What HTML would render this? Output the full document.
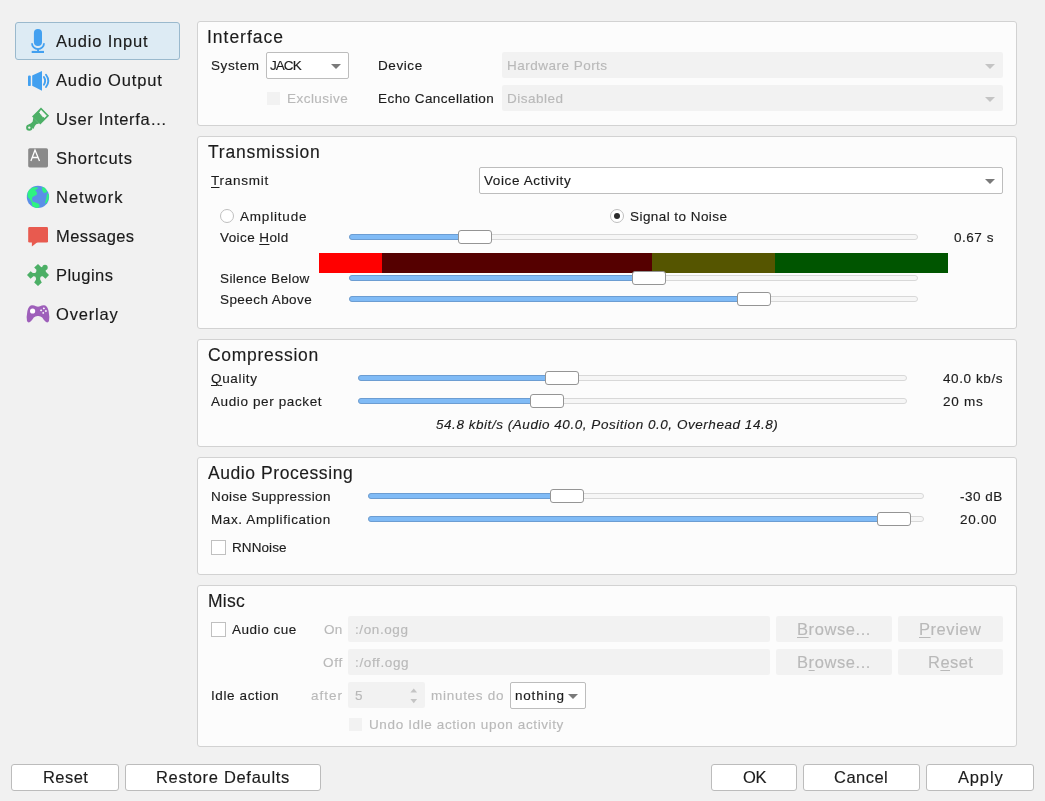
<!DOCTYPE html>
<html><head><meta charset="utf-8"><style>
html,body{margin:0;padding:0;}
body{width:1045px;height:801px;background:#f1f1f1;position:relative;overflow:hidden;font-family:"Liberation Sans",sans-serif;}
.b{position:absolute;box-sizing:content-box;}
.t{position:absolute;white-space:pre;line-height:1;font-family:"Liberation Sans",sans-serif;will-change:transform;-webkit-text-stroke:0.15px currentColor;}
u{text-decoration:underline;text-decoration-thickness:1px;text-underline-offset:2px;}
</style></head><body>
<div class="b" style="left:15px;top:22px;width:163px;height:36px;background:#ddebf4;border:1px solid #9ab9cd;border-radius:3px"></div>
<span class="t" style="left:56.09px;top:33px;font-size:16.5px;letter-spacing:0.815px;color:#1a1a1a">Audio Input</span>
<span class="t" style="left:56.09px;top:72px;font-size:16.5px;letter-spacing:0.861px;color:#1a1a1a">Audio Output</span>
<span class="t" style="left:56.12px;top:111px;font-size:16.5px;letter-spacing:0.677px;color:#1a1a1a">User Interfa…</span>
<span class="t" style="left:56.31px;top:150px;font-size:16.5px;letter-spacing:0.787px;color:#1a1a1a">Shortcuts</span>
<span class="t" style="left:56.22px;top:189px;font-size:16.5px;letter-spacing:1.001px;color:#1a1a1a">Network</span>
<span class="t" style="left:56.22px;top:228px;font-size:16.5px;letter-spacing:0.408px;color:#1a1a1a">Messages</span>
<span class="t" style="left:56.22px;top:267px;font-size:16.5px;letter-spacing:0.466px;color:#1a1a1a">Plugins</span>
<span class="t" style="left:56.12px;top:306px;font-size:16.5px;letter-spacing:0.799px;color:#1a1a1a">Overlay</span>

<svg class="b" style="left:24px;top:26px" width="28" height="30" viewBox="0 0 28 30">
 <rect x="9.9" y="3" width="8.1" height="17" rx="4.05" fill="#42a0f0"/>
 <path d="M8 17.2 A6 6 0 0 0 20 17.2" fill="none" stroke="#42a0f0" stroke-width="1.8"/>
 <rect x="13.1" y="22.5" width="1.9" height="2.6" fill="#42a0f0"/>
 <rect x="7.7" y="24.9" width="12.3" height="2.1" fill="#42a0f0"/>
</svg>
<svg class="b" style="left:24px;top:66px" width="28" height="28" viewBox="0 0 28 28">
 <rect x="4" y="9.4" width="2.8" height="10.7" rx="1.2" fill="#42a0f0"/>
 <path d="M8.2 9.6 L18 5.1 L18 24.8 L8.2 19.8 Z" fill="#42a0f0"/>
 <path d="M19.9 11 Q22.4 14.85 19.9 18.7" fill="none" stroke="#42a0f0" stroke-width="1.9" stroke-linecap="round"/>
 <path d="M22 8.7 Q26.6 14.85 22 21" fill="none" stroke="#42a0f0" stroke-width="1.9" stroke-linecap="round"/>
</svg>
<svg class="b" style="left:24px;top:104px" width="28" height="30" viewBox="0 0 28 30">
 <path d="M17 3.6 L25.1 11.8 L16.3 20.6 L8 12.5 Z M9.2 13.7 L15.1 19.4 L12.2 20.2 L10.8 22 L9.4 25 L4.4 20.6 L7 19.2 L8.7 17.5 Z" fill="#4caf66"/>
 <path d="M17 5.8 L22.8 11.8 L20.4 14.1 L19.6 13 L18.6 13.2 L18.2 12 L17.3 11.6 L17.2 10.5 L16.2 10.2 L15.9 9 L15 8.8 Z" fill="#f4f4f4"/>
 <circle cx="5.3" cy="23.6" r="2.2" fill="none" stroke="#4caf66" stroke-width="2"/>
</svg>
<svg class="b" style="left:24px;top:144px" width="28" height="28" viewBox="0 0 28 28">
 <rect x="4.2" y="4.2" width="19.8" height="19.2" rx="1.6" fill="#8a8a8a"/>
 <path d="M6.9 17.1 L11 6.1 L15.5 17.1 M8.6 13.5 L13.9 13.5" fill="none" stroke="#ffffff" stroke-width="1.3"/>
</svg>
<svg class="b" style="left:24px;top:182px" width="28" height="30" viewBox="0 0 28 30">
 <circle cx="13.95" cy="14.9" r="11.15" fill="#5b8fe8"/>
 <path d="M8.6 5.6 Q11 5 13.5 5.2 L13.9 6.6 L11.2 8 L13.1 10.9 L12.7 12.7 L8.6 15 L8 16.8 L8.6 19.5 L11.5 20.6 L15 22.1 L15.7 24.7 Q14 26 12.4 25.9 Q9.8 25.3 8.2 24 L7.9 21 L6.7 18.3 L3.7 15 Q3.3 12.5 3.9 10.1 Q4.6 8.5 5.6 7.5 Z" fill="#2ef380"/>
 <path d="M18 4.9 Q20 5.3 21 6 Q22.4 7.6 23.2 9.7 L22.1 10.5 L19.8 10.9 L18.3 8.6 Z" fill="#2ef380"/>
 <path d="M23.2 10.9 L24.7 12.4 Q25.3 15.4 24.3 18 Q23.3 20.2 21.7 21.7 L21 21 L22.1 16.8 L22.8 13.5 Z" fill="#2ef380"/>
</svg>
<svg class="b" style="left:24px;top:222px" width="28" height="28" viewBox="0 0 28 28">
 <rect x="4.2" y="5.1" width="19.8" height="15.5" rx="1.3" fill="#e85a4f"/>
 <path d="M7.9 20 L7.9 24.5 L13.6 20 Z" fill="#e85a4f"/>
</svg>
<svg class="b" style="left:24px;top:260px" width="28" height="30" viewBox="0 0 28 30">
 <path d="M14 3.9 L17.3 7.3 L19.3 9.3 L21.3 11.3 L25 15 L21.5 18.8 L18.7 16.3 Q16.4 15.8 16.2 18 L16.2 19.6 L17.8 22.4 L14 26 L10.2 22.4 L12 19.6 L12 18.5 Q11.8 15.9 9.4 16.3 L6.6 18.8 L3 15 L6.6 11.2 L8.8 12.9 Q12.6 13.8 12.4 9.7 L10.2 7.6 Z" fill="#4caf66"/>
 <circle cx="21" cy="7.5" r="2.7" fill="#4caf66"/>
 <path d="M16.5 7.5 L20.5 6.5 L22 11.5 L17.5 13 Z" fill="#4caf66"/>
</svg>
<svg class="b" style="left:24px;top:300px" width="28" height="28" viewBox="0 0 28 28">
 <path d="M7.7 5.2 Q10 5 12 6.3 Q14 7 16 6.3 Q18 5 20.3 5.2 Q23.5 5.8 24.6 11 Q25.8 17 25 21 Q24 23.2 22 22 Q20 20.5 18.2 17.5 Q16.5 15.8 14 16 Q11.5 15.8 9.8 17.5 Q8 20.5 6 22 Q4 23.2 3 21 Q2.2 17 3.4 11 Q4.5 5.8 7.7 5.2 Z" fill="#9e5fba"/>
 <circle cx="8.6" cy="11" r="2.6" fill="#ffffff"/>
 <rect x="19.1" y="7.6" width="1.6" height="1.6" fill="#ffffff" transform="rotate(45 19.9 8.4)"/>
 <rect x="16.3" y="9.5" width="1.6" height="1.6" fill="#ffffff" transform="rotate(45 17.1 10.3)"/>
 <rect x="21.1" y="10.2" width="1.6" height="1.6" fill="#ffffff" transform="rotate(45 21.9 11)"/>
 <rect x="18.4" y="12.1" width="1.6" height="1.6" fill="#ffffff" transform="rotate(45 19.2 12.9)"/>
</svg>

<div class="b" style="left:197px;top:21px;width:818px;height:103px;background:#fcfcfc;border:1px solid #d2d2d2;border-radius:3px"></div>
<span class="t" style="left:206.55px;top:29px;font-size:17.5px;letter-spacing:0.979px;color:#1c1c1c">Interface</span>
<span class="t" style="left:211.04px;top:59px;font-size:13.5px;letter-spacing:0.602px;color:#1c1c1c">System</span>
<div class="b" style="left:266px;top:52px;width:81px;height:25px;background:#ffffff;border:1px solid #bdbdbd;border-radius:2px"></div>
<div class="b" style="left:331.0px;top:64.0px;width:0;height:0;border-left:5.0px solid transparent;border-right:5.0px solid transparent;border-top:5px solid #7a7a7a"></div>
<span class="t" style="left:270.12px;top:59px;font-size:13.5px;letter-spacing:-0.957px;color:#1c1c1c">JACK</span>
<span class="t" style="left:378.37px;top:59px;font-size:13.5px;letter-spacing:0.587px;color:#1c1c1c">Device</span>
<div class="b" style="left:502px;top:52px;width:501px;height:26px;background:#f2f2f2;border-radius:2px"></div>
<div class="b" style="left:985.0px;top:63.5px;width:0;height:0;border-left:5.0px solid transparent;border-right:5.0px solid transparent;border-top:5px solid #c4c4c4"></div>
<span class="t" style="left:507.17px;top:59px;font-size:13.5px;letter-spacing:0.486px;color:#b9b9b9">Hardware Ports</span>
<div class="b" style="left:267px;top:92px;width:13px;height:13px;background:#f2f2f2"></div>
<span class="t" style="left:286.87px;top:92px;font-size:13.5px;letter-spacing:0.463px;color:#b9b9b9">Exclusive</span>
<span class="t" style="left:378.37px;top:92px;font-size:13.5px;letter-spacing:0.437px;color:#1c1c1c">Echo Cancellation</span>
<div class="b" style="left:502px;top:85px;width:501px;height:26px;background:#f2f2f2;border-radius:2px"></div>
<div class="b" style="left:985.0px;top:96.5px;width:0;height:0;border-left:5.0px solid transparent;border-right:5.0px solid transparent;border-top:5px solid #c4c4c4"></div>
<span class="t" style="left:507.17px;top:92px;font-size:13.5px;letter-spacing:0.495px;color:#b9b9b9">Disabled</span>
<div class="b" style="left:197px;top:136px;width:818px;height:191px;background:#fcfcfc;border:1px solid #d2d2d2;border-radius:3px"></div>
<span class="t" style="left:208.06px;top:144px;font-size:17.5px;letter-spacing:0.764px;color:#1c1c1c">Transmission</span>
<span class="t" style="left:211.46px;top:174px;font-size:13.5px;letter-spacing:0.752px;color:#1c1c1c"><u>T</u>ransmit</span>
<div class="b" style="left:479px;top:167px;width:522px;height:25px;background:#ffffff;border:1px solid #bdbdbd;border-radius:2px"></div>
<div class="b" style="left:985.0px;top:179.0px;width:0;height:0;border-left:5.0px solid transparent;border-right:5.0px solid transparent;border-top:5px solid #7a7a7a"></div>
<span class="t" style="left:484.04px;top:174px;font-size:13.5px;letter-spacing:0.608px;color:#1c1c1c">Voice Activity</span>
<div class="b" style="left:220px;top:209px;width:12px;height:12px;background:#ffffff;border:1px solid #bfbfbf;border-radius:7px"></div>
<span class="t" style="left:240.08px;top:210px;font-size:13.5px;letter-spacing:0.802px;color:#1c1c1c">Amplitude</span>
<div class="b" style="left:610px;top:209px;width:12px;height:12px;background:#ffffff;border:1px solid #bfbfbf;border-radius:7px"></div>
<div class="b" style="left:613.75px;top:212.75px;width:6.5px;height:6.5px;background:#2b2b2b;border-radius:4px"></div>
<span class="t" style="left:630.24px;top:210px;font-size:13.5px;letter-spacing:0.441px;color:#1c1c1c">Signal to Noise</span>
<span class="t" style="left:220.04px;top:231px;font-size:13.5px;letter-spacing:0.410px;color:#1c1c1c">Voice <u>H</u>old</span>
<div class="b" style="left:349px;top:234px;width:567px;height:4px;background:#f6f6f6;border:1px solid #d8d8d8;border-radius:3px"></div>
<div class="b" style="left:349px;top:234px;width:113px;height:4px;background:#80bbf6;border:1px solid #6c9dd2;border-radius:3px"></div>
<div class="b" style="left:458px;top:230px;width:32px;height:12px;background:#ffffff;border:1px solid #959595;border-radius:3px"></div>
<span class="t" style="left:954.03px;top:231px;font-size:13.5px;letter-spacing:0.520px;color:#1c1c1c">0.67 s</span>
<div class="b" style="left:319px;top:253px;width:63px;height:20px;background:#ff0000"></div>
<div class="b" style="left:382px;top:253px;width:270px;height:20px;background:#550000"></div>
<div class="b" style="left:652px;top:253px;width:123px;height:20px;background:#555500"></div>
<div class="b" style="left:775px;top:253px;width:173px;height:20px;background:#005500"></div>
<span class="t" style="left:220.24px;top:272px;font-size:13.5px;letter-spacing:0.374px;color:#1c1c1c">Silence Below</span>
<div class="b" style="left:349px;top:275px;width:567px;height:4px;background:#f6f6f6;border:1px solid #d8d8d8;border-radius:3px"></div>
<div class="b" style="left:349px;top:275px;width:287px;height:4px;background:#80bbf6;border:1px solid #6c9dd2;border-radius:3px"></div>
<div class="b" style="left:632px;top:271px;width:32px;height:12px;background:#ffffff;border:1px solid #959595;border-radius:3px"></div>
<span class="t" style="left:220.24px;top:293px;font-size:13.5px;letter-spacing:0.423px;color:#1c1c1c">Speech Above</span>
<div class="b" style="left:349px;top:296px;width:567px;height:4px;background:#f6f6f6;border:1px solid #d8d8d8;border-radius:3px"></div>
<div class="b" style="left:349px;top:296px;width:392px;height:4px;background:#80bbf6;border:1px solid #6c9dd2;border-radius:3px"></div>
<div class="b" style="left:737px;top:292px;width:32px;height:12px;background:#ffffff;border:1px solid #959595;border-radius:3px"></div>
<div class="b" style="left:197px;top:339px;width:818px;height:106px;background:#fcfcfc;border:1px solid #d2d2d2;border-radius:3px"></div>
<span class="t" style="left:207.57px;top:347px;font-size:17.5px;letter-spacing:0.721px;color:#1c1c1c">Compression</span>
<span class="t" style="left:210.89px;top:372px;font-size:13.5px;letter-spacing:0.664px;color:#1c1c1c"><u>Q</u>uality</span>
<div class="b" style="left:358px;top:375px;width:547px;height:4px;background:#f6f6f6;border:1px solid #d8d8d8;border-radius:3px"></div>
<div class="b" style="left:358px;top:375px;width:191px;height:4px;background:#80bbf6;border:1px solid #6c9dd2;border-radius:3px"></div>
<div class="b" style="left:545px;top:371px;width:32px;height:12px;background:#ffffff;border:1px solid #959595;border-radius:3px"></div>
<span class="t" style="left:942.92px;top:372px;font-size:13.5px;letter-spacing:0.594px;color:#1c1c1c">40.0 kb/s</span>
<span class="t" style="left:210.88px;top:395px;font-size:13.5px;letter-spacing:0.613px;color:#1c1c1c">Audio per packet</span>
<div class="b" style="left:358px;top:398px;width:547px;height:4px;background:#f6f6f6;border:1px solid #d8d8d8;border-radius:3px"></div>
<div class="b" style="left:358px;top:398px;width:176px;height:4px;background:#80bbf6;border:1px solid #6c9dd2;border-radius:3px"></div>
<div class="b" style="left:530px;top:394px;width:32px;height:12px;background:#ffffff;border:1px solid #959595;border-radius:3px"></div>
<span class="t" style="left:942.67px;top:395px;font-size:13.5px;letter-spacing:0.732px;color:#1c1c1c">20 ms</span>
<span class="t" style="left:435.96px;top:418px;font-size:13.5px;letter-spacing:0.540px;color:#1c1c1c;font-style:italic">54.8 kbit/s (Audio 40.0, Position 0.0, Overhead 14.8)</span>
<div class="b" style="left:197px;top:457px;width:818px;height:116px;background:#fcfcfc;border:1px solid #d2d2d2;border-radius:3px"></div>
<span class="t" style="left:207.60px;top:465px;font-size:17.5px;letter-spacing:0.565px;color:#1c1c1c">Audio Processing</span>
<span class="t" style="left:210.97px;top:490px;font-size:13.5px;letter-spacing:0.386px;color:#1c1c1c">Noise Suppression</span>
<div class="b" style="left:368px;top:493px;width:554px;height:4px;background:#f6f6f6;border:1px solid #d8d8d8;border-radius:3px"></div>
<div class="b" style="left:368px;top:493px;width:186px;height:4px;background:#80bbf6;border:1px solid #6c9dd2;border-radius:3px"></div>
<div class="b" style="left:550px;top:489px;width:32px;height:12px;background:#ffffff;border:1px solid #959595;border-radius:3px"></div>
<span class="t" style="left:959.63px;top:490px;font-size:13.5px;letter-spacing:0.503px;color:#1c1c1c">-30 dB</span>
<span class="t" style="left:210.97px;top:513px;font-size:13.5px;letter-spacing:0.614px;color:#1c1c1c">Max. Amplification</span>
<div class="b" style="left:368px;top:516px;width:554px;height:4px;background:#f6f6f6;border:1px solid #d8d8d8;border-radius:3px"></div>
<div class="b" style="left:368px;top:516px;width:513px;height:4px;background:#80bbf6;border:1px solid #6c9dd2;border-radius:3px"></div>
<div class="b" style="left:877px;top:512px;width:32px;height:12px;background:#ffffff;border:1px solid #959595;border-radius:3px"></div>
<span class="t" style="left:959.67px;top:513px;font-size:13.5px;letter-spacing:0.706px;color:#1c1c1c">20.00</span>
<div class="b" style="left:211px;top:540px;width:13px;height:13px;background:#ffffff;border:1px solid #c0c0c0"></div>
<span class="t" style="left:231.77px;top:541px;font-size:13.5px;letter-spacing:0.091px;color:#1c1c1c">RNNoise</span>
<div class="b" style="left:197px;top:585px;width:818px;height:160px;background:#fcfcfc;border:1px solid #d2d2d2;border-radius:3px"></div>
<span class="t" style="left:207.73px;top:593px;font-size:17.5px;letter-spacing:0.268px;color:#1c1c1c">Misc</span>
<div class="b" style="left:211px;top:622px;width:13px;height:13px;background:#ffffff;border:1px solid #c0c0c0"></div>
<span class="t" style="left:232.08px;top:623px;font-size:13.5px;letter-spacing:0.532px;color:#1c1c1c">Audio cue</span>
<span class="t" style="left:323.62px;top:623px;font-size:13.5px;letter-spacing:0.145px;color:#b9b9b9">On</span>
<div class="b" style="left:348px;top:616px;width:422px;height:26px;background:#f2f2f2;border-radius:2px"></div>
<span class="t" style="left:355.29px;top:623px;font-size:13.5px;letter-spacing:0.593px;color:#b9b9b9">:/on.ogg</span>
<div class="b" style="left:776px;top:616px;width:116px;height:26px;background:#f2f2f2;border-radius:2px"></div>
<span class="t" style="left:797.28px;top:621px;font-size:16.5px;letter-spacing:0.582px;color:#b9b9b9"><u>B</u>rowse...</span>
<div class="b" style="left:898px;top:616px;width:105px;height:26px;background:#f2f2f2;border-radius:2px"></div>
<span class="t" style="left:919.26px;top:621px;font-size:16.5px;letter-spacing:0.550px;color:#b9b9b9"><u>P</u>review</span>
<span class="t" style="left:322.70px;top:656px;font-size:13.5px;letter-spacing:0.760px;color:#b9b9b9">Off</span>
<div class="b" style="left:348px;top:649px;width:422px;height:26px;background:#f2f2f2;border-radius:2px"></div>
<span class="t" style="left:355.29px;top:656px;font-size:13.5px;letter-spacing:0.634px;color:#b9b9b9">:/off.ogg</span>
<div class="b" style="left:776px;top:649px;width:116px;height:26px;background:#f2f2f2;border-radius:2px"></div>
<span class="t" style="left:797.28px;top:654px;font-size:16.5px;letter-spacing:0.582px;color:#b9b9b9">B<u>r</u>owse...</span>
<div class="b" style="left:898px;top:649px;width:105px;height:26px;background:#f2f2f2;border-radius:2px"></div>
<span class="t" style="left:928.01px;top:654px;font-size:16.5px;letter-spacing:0.458px;color:#b9b9b9">R<u>e</u>set</span>
<span class="t" style="left:210.83px;top:689px;font-size:13.5px;letter-spacing:0.604px;color:#1c1c1c">Idle action</span>
<span class="t" style="left:311.22px;top:689px;font-size:13.5px;letter-spacing:0.997px;color:#b9b9b9">after</span>
<div class="b" style="left:348px;top:682px;width:77px;height:26px;background:#f2f2f2;border-radius:2px"></div>
<span class="t" style="left:355.46px;top:689px;font-size:13.5px;letter-spacing:0.000px;color:#b9b9b9">5</span>
<svg class="b" style="left:408px;top:686px" width="12" height="20" viewBox="0 0 12 20"><path d="M2.4 6.6 L5.75 2.4 L9.1 6.6 Z" fill="#c4c4c4"/><path d="M2.4 13 L5.75 17.3 L9.1 13 Z" fill="#c4c4c4"/></svg>
<span class="t" style="left:430.68px;top:689px;font-size:13.5px;letter-spacing:0.722px;color:#b9b9b9">minutes do</span>
<div class="b" style="left:510px;top:682px;width:74px;height:25px;background:#ffffff;border:1px solid #bdbdbd;border-radius:2px"></div>
<div class="b" style="left:568.0px;top:694.0px;width:0;height:0;border-left:5.0px solid transparent;border-right:5.0px solid transparent;border-top:5px solid #7a7a7a"></div>
<span class="t" style="left:515.28px;top:689px;font-size:13.5px;letter-spacing:0.791px;color:#1c1c1c">nothing</span>
<div class="b" style="left:349px;top:718px;width:13px;height:13px;background:#f2f2f2"></div>
<span class="t" style="left:368.69px;top:718px;font-size:13.5px;letter-spacing:0.621px;color:#b9b9b9">Undo Idle action upon activity</span>
<div class="b" style="left:11px;top:764px;width:106px;height:25px;background:#ffffff;border:1px solid #bcbcbc;border-radius:3px"></div>
<span class="t" style="left:42.51px;top:769px;font-size:16.5px;letter-spacing:0.458px;color:#1c1c1c">Reset</span>
<div class="b" style="left:125px;top:764px;width:194px;height:25px;background:#ffffff;border:1px solid #bcbcbc;border-radius:3px"></div>
<span class="t" style="left:156.38px;top:769px;font-size:16.5px;letter-spacing:0.692px;color:#1c1c1c">Restore Defaults</span>
<div class="b" style="left:711px;top:764px;width:84px;height:25px;background:#ffffff;border:1px solid #bcbcbc;border-radius:3px"></div>
<span class="t" style="left:742.57px;top:769px;font-size:16.5px;letter-spacing:-0.349px;color:#1c1c1c">OK</span>
<div class="b" style="left:803px;top:764px;width:115px;height:25px;background:#ffffff;border:1px solid #bcbcbc;border-radius:3px"></div>
<span class="t" style="left:834.46px;top:769px;font-size:16.5px;letter-spacing:0.477px;color:#1c1c1c">Cancel</span>
<div class="b" style="left:926px;top:764px;width:106px;height:25px;background:#ffffff;border:1px solid #bcbcbc;border-radius:3px"></div>
<span class="t" style="left:957.51px;top:769px;font-size:16.5px;letter-spacing:0.840px;color:#1c1c1c">Apply</span>
</body></html>
